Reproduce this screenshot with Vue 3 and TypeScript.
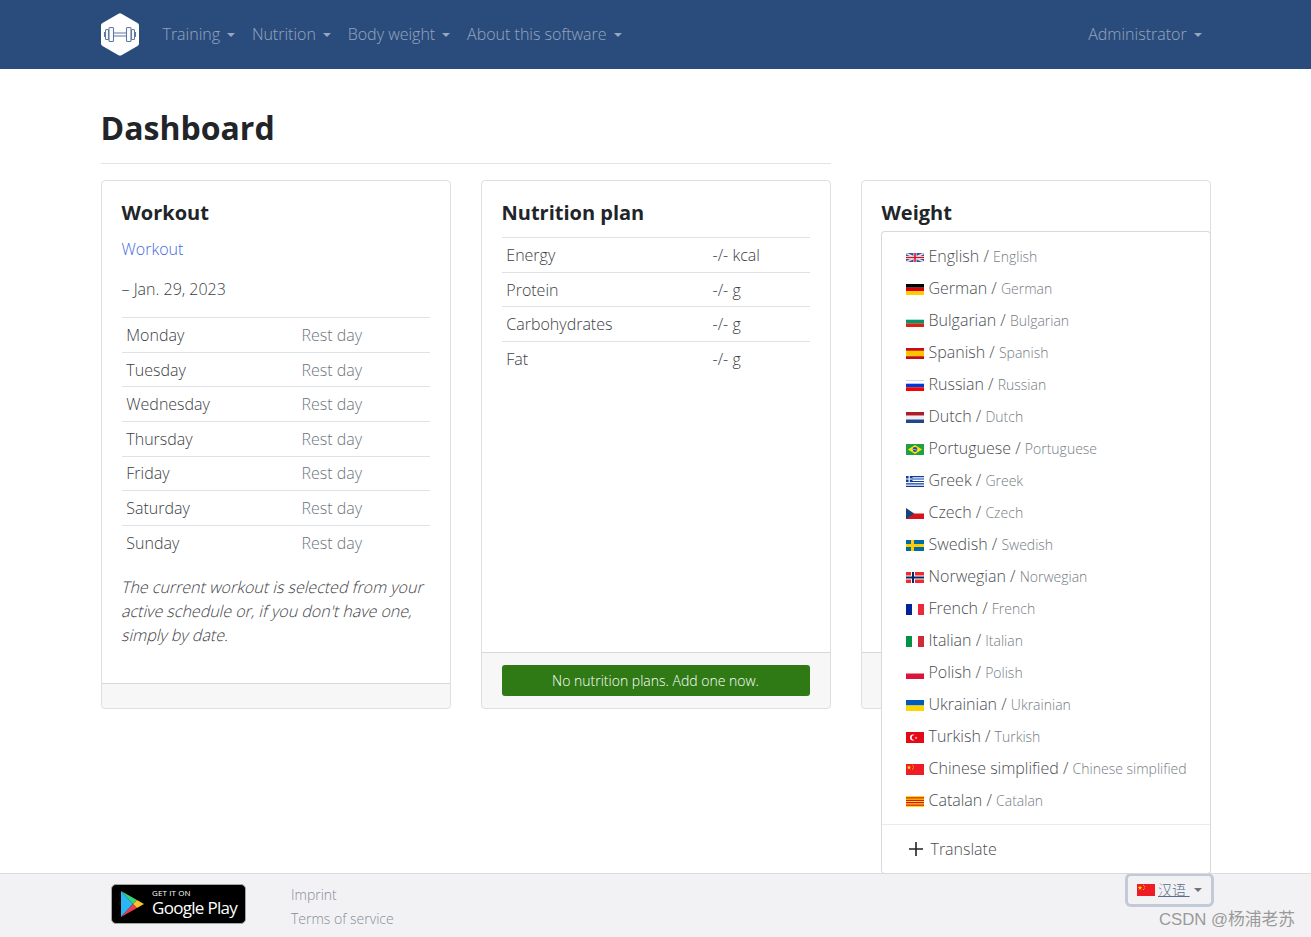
<script setup lang="ts">
type Shape = [string, string]

const navItems: string[] = ['Training', 'Nutrition', 'Body weight', 'About this software']
const days: string[] = ['Monday', 'Tuesday', 'Wednesday', 'Thursday', 'Friday', 'Saturday', 'Sunday']
const macros: [string, string][] = [
  ['Energy', '-/- kcal'],
  ['Protein', '-/- g'],
  ['Carbohydrates', '-/- g'],
  ['Fat', '-/- g'],
]
const noteLines: string[] = [
  'The current workout is selected from your',
  "active schedule or, if you don't have one,",
  'simply by date.',
]

const china: Shape[] = [
  ['M0 0h18v11H0z', '#ee1c25'],
  ['M3 1.2l.6 1.6h1.6l-1.3 1 .5 1.6L3 4.4l-1.4 1 .5-1.6-1.3-1h1.6z', '#ffde00'],
  ['M6 .8h.8v.8H6zM7 2h.8v.8H7zM7 3.4h.8v.8H7zM6 4.6h.8v.8H6z', '#ffde00'],
]

const languages: { name: string; flag: Shape[] }[] = [
  {
    name: 'English',
    flag: [
      ['M0 1h18v9H0z', '#3b4f93'],
      ['M0 1.2h2L18 9v1h-2L0 2.2zM18 1.2h-2L0 9v1h2L18 2.2z', '#e8dfe6'],
      ['M7.5 1h3v9h-3zM0 4h18v3H0z', '#fff'],
      ['M8.2 1h1.6v9H8.2zM0 4.7h18v1.6H0z', '#cf142b'],
    ],
  },
  { name: 'German', flag: [['M0 0h18v3.7H0z', '#000'], ['M0 3.7h18v3.6H0z', '#d00'], ['M0 7.3h18V11H0z', '#ffce00']] },
  { name: 'Bulgarian', flag: [['M0 3.7h18v3.6H0z', '#00966e'], ['M0 7.3h18V11H0z', '#d62612']] },
  { name: 'Spanish', flag: [['M0 0h18v11H0z', '#c60b1e'], ['M0 2.7h18v5.6H0z', '#ffc400']] },
  { name: 'Russian', flag: [['M0 3.7h18v3.6H0z', '#0039d5'], ['M0 7.3h18V11H0z', '#f00'], ['M0 0h18v.6H0z', '#b9b9d6']] },
  { name: 'Dutch', flag: [['M0 0h18v3.7H0z', '#ae1c28'], ['M0 7.3h18V11H0z', '#21468b'], ['M0 3.7h18v3.6H0z', '#f1eef1']] },
  {
    name: 'Portuguese',
    flag: [
      ['M0 0h18v11H0z', '#229e45'],
      ['M9 1l7 4.5L9 10 2 5.5z', '#f8e509'],
      ['M9 3.1a2.4 2.4 0 1 0 0 4.8 2.4 2.4 0 0 0 0-4.8z', '#2b49a3'],
      ['M6.8 4.9l4.5 1.2v.5L6.700 5.4z', '#fff'],
    ],
  },
  {
    name: 'Greek',
    flag: [
      ['M0 0h18v11H0z', '#fff'],
      ['M0 0h18v1.2H0zM0 2.4h18v1.2H0zM0 4.9h18v1.2H0zM0 7.3h18v1.2H0zM0 9.8h18V11H0z', '#0d3da1'],
      ['M0 0h6.5v6.1H0z', '#0d3da1'],
      ['M2.6 0h1.2v6.1H2.6zM0 2.4h6.5v1.2H0z', '#fff'],
    ],
  },
  { name: 'Czech', flag: [['M0 0h18v5.5H0z', '#fff'], ['M0 5.5h18V11H0z', '#d7141a'], ['M0 0l8.2 5.5L0 11z', '#11457e']] },
  { name: 'Swedish', flag: [['M0 0h18v11H0z', '#006aa7'], ['M5 0h3v11H5zM0 4h18v3H0z', '#fecc00']] },
  {
    name: 'Norwegian',
    flag: [['M0 0h18v11H0z', '#ef2b2d'], ['M5 0h4v11H5zM0 3.5h18v4H0z', '#fff'], ['M6 0h2v11H6zM0 4.500h18v2H0z', '#002868']],
  },
  { name: 'French', flag: [['M0 0h6v11H0z', '#002395'], ['M12 0h6v11h-6z', '#ed2939']] },
  { name: 'Italian', flag: [['M0 0h6v11H0z', '#009246'], ['M12 0h6v11h-6z', '#ce2b37']] },
  { name: 'Polish', flag: [['M0 5.5h18V11H0z', '#dc143c']] },
  { name: 'Ukrainian', flag: [['M0 0h18v5.5H0z', '#005bbb'], ['M0 5.5h18V11H0z', '#ffd500']] },
  {
    name: 'Turkish',
    flag: [
      ['M0 0h18v11H0z', '#e30a17'],
      ['M7 2.5a3 3 0 1 0 0 6 3 3 0 0 0 2-.8 2.4 2.4 0 1 1 0-4.4 3 3 0 0 0-2-.8z', '#fff'],
      ['M10 4.500l.4 1h1l-.8.6.3 1-.9-.6-.8.6.3-1-.8-.6h1z', '#fff'],
    ],
  },
  { name: 'Chinese simplified', flag: china },
  {
    name: 'Catalan',
    flag: [
      ['M0 0h18v11H0z', '#fcdd09'],
      ['M0 1.2h18v1.2H0zM0 3.7h18v1.2H0zM0 6.1h18v1.2H0zM0 8.6h18v1.2H0z', '#da121a'],
    ],
  },
]
</script>

<template>
  <div class="page">
    <nav class="navbar">
      <div class="nav-inner">
        <svg class="logo" viewBox="0 0 38 43" aria-label="wger logo">
          <path d="M17.5.7a3 3 0 0 1 3 0l16 9.2a3 3 0 0 1 1.500 2.600v18a3 3 0 0 1-1.500 2.600l-16 9.200a3 3 0 0 1-3 0l-16-9.200A3 3 0 0 1 0 30.500v-18a3 3 0 0 1 1.500-2.600z" fill="#fff" />
          <g fill="none" stroke="#5e789f" stroke-width="1.100">
            <path d="M3.500 19v5M34.500 19v5M13 20h12M13 23h12" />
            <rect x="4.500" y="16.500" width="3" height="10" rx="1" />
            <rect x="8" y="14.500" width="4.500" height="14" rx="1" />
            <rect x="25.500" y="14.500" width="4.500" height="14" rx="1" />
            <rect x="30.500" y="16.500" width="3" height="10" rx="1" />
          </g>
        </svg>
        <a v-for="item in navItems" :key="item" class="nav-link">{{ item }}<span class="caret"></span></a>
        <a class="nav-link nav-right">Administrator<span class="caret"></span></a>
      </div>
    </nav>

    <main class="content">
      <h2 class="page-title">Dashboard</h2>
      <div class="cards">
        <section class="card">
          <div class="card-body">
            <h5 class="card-title">Workout</h5>
            <p class="para"><a class="link">Workout</a></p>
            <p class="para">– Jan. 29, 2023</p>
            <table class="table">
              <tbody>
                <tr v-for="day in days" :key="day">
                  <td class="day">{{ day }}</td>
                  <td class="muted">Rest day</td>
                </tr>
              </tbody>
            </table>
            <p class="para">
              <span v-for="line in noteLines" :key="line" class="note-line">{{ line }}</span>
            </p>
          </div>
          <div class="card-footer"></div>
        </section>

        <section class="card">
          <div class="card-body">
            <h5 class="card-title">Nutrition plan</h5>
            <table class="table">
              <tbody>
                <tr v-for="m in macros" :key="m[0]">
                  <td class="macro">{{ m[0] }}</td>
                  <td>{{ m[1] }}</td>
                </tr>
              </tbody>
            </table>
          </div>
          <div class="card-footer"><a class="btn-green">No nutrition plans. Add one now.</a></div>
        </section>

        <section class="card">
          <div class="card-body">
            <h5 class="card-title">Weight</h5>
          </div>
          <div class="card-footer"><a class="btn-green">&nbsp;</a></div>
        </section>
      </div>
    </main>

    <footer class="footer">
      <div class="footer-inner">
        <div class="badge">
          <svg class="play" viewBox="0 0 23 26">
            <path d="M0 0v26l12-13z" fill="#29b6f2" />
            <path d="M0 0l12 13 4-4z" fill="#3bd17a" />
            <path d="M0 26l12-13 4 4z" fill="#ec3b4c" />
            <path d="M16 9l7 4-7 4-4-4z" fill="#fbc02d" />
          </svg>
          <div class="badge-text">
            <span class="badge-small">GET IT ON</span>
            <span class="badge-large">Google Play</span>
          </div>
        </div>
        <div class="footer-links">
          <a>Imprint</a>
          <a>Terms of service</a>
        </div>
        <div class="lang">
          <div class="dropdown">
            <a v-for="lang in languages" :key="lang.name" class="dropdown-item">
              <svg class="flag" viewBox="0 0 18 11">
                <path v-for="(s, i) in lang.flag" :key="i" :d="s[0]" :fill="s[1]" />
              </svg>
              <span>{{ lang.name }} / <small>{{ lang.name }}</small></span>
            </a>
            <div class="divider"></div>
            <a class="dropdown-item translate">
              <svg class="plus" viewBox="0 0 14 14"><path d="M7 0v14M0 7h14" stroke="#212529" stroke-width="1.600" fill="none" /></svg>
              <span>Translate</span>
            </a>
          </div>
          <button class="lang-btn" type="button">
            <svg class="btn-flag" viewBox="0 0 18 11" preserveAspectRatio="none">
              <path v-for="(s, i) in china" :key="i" :d="s[0]" :fill="s[1]" />
            </svg>
            <span class="lang-text">汉语 </span><span class="caret dark"></span>
          </button>
        </div>
      </div>
      <span class="watermark">CSDN @杨浦老苏</span>
    </footer>
  </div>
</template>

<style>
html, body { margin: 0; background: #fff; }
</style>

<style scoped>
.page {
  height: 937px;
  display: flex;
  flex-direction: column;
  font-family: "Open Sans", "Noto Sans CJK SC", sans-serif;
  font-size: 16px;
  font-weight: 300;
  line-height: 24px;
  color: #3c4045;
  overflow: hidden;
}
.navbar { height: 69px; background: #2a4c7d; flex: none; }
.nav-inner {
  width: 1110px;
  margin: 0 auto;
  height: 100%;
  display: flex;
  align-items: center;
  box-sizing: border-box;
}
.logo { width: 38px; height: 43px; margin-right: 16px; flex: none; }
.nav-link { padding: 8px 8px 9px; color: rgba(255, 255, 255, .5); white-space: nowrap; }
.nav-right { margin-left: auto; }
.caret {
  display: inline-block;
  margin: 0 .85px 0 7px;
  vertical-align: 3px;
  border-top: 4.400px solid;
  border-right: 4.400px solid transparent;
  border-left: 4.400px solid transparent;
  width: 0;
  height: 0;
}
.caret.dark { color: #6c757d; margin: 0 0 0 4px; vertical-align: 2px; border-width: 4px 4px 0; }

.content {
  flex: 1;
  width: 1110px;
  margin: 0 auto;
  padding: 40px 0 0;
  box-sizing: border-box;
}
.page-title {
  width: 730px;
  margin: 0 0 16.300px;
  padding-bottom: 16px;
  font-size: 32px;
  font-weight: 700;
  line-height: 38px;
  color: #212529;
  border-bottom: 1px solid #e3e3e3;
}
.cards { display: flex; gap: 30px; align-items: stretch; }
.card {
  width: 350px;
  box-sizing: border-box;
  border: 1px solid rgba(0, 0, 0, .125);
  border-radius: 4px;
  display: flex;
  flex-direction: column;
}
.card-body { flex: 1; padding: 20px; }
.card-title { margin: 0 0 12px; font-size: 20px; font-weight: 700; line-height: 24px; color: #212529; }
.para { margin: 0 0 16px; }
.link { color: #3f6bdc; }
.note-line {
  display: block;
  width: max-content;
  margin-left: -1px;
  white-space: nowrap;
  transform: skewX(-14deg);
  transform-origin: 0 75%;
}
.table { width: 100%; table-layout: fixed; border-collapse: collapse; margin-bottom: 16px; }
.table td { padding: 4.800px; border-top: 1px solid #dee2e6; line-height: 24px; }
.day { width: 175.200px; box-sizing: border-box; }
.macro { width: 206.200px; box-sizing: border-box; }
.muted { color: #6c757d; }
.card-footer {
  padding: 12px 20px;
  background: rgba(0, 0, 0, .03);
  border-top: 1px solid rgba(0, 0, 0, .125);
  border-radius: 0 0 3px 3px;
}
.btn-green {
  display: block;
  height: 31px;
  line-height: 31px;
  text-align: center;
  font-size: 14px;
  color: #fff;
  background: #2f7a15;
  border-radius: 3px;
}

.footer {
  position: relative;
  flex: none;
  height: 64px;
  box-sizing: border-box;
  background: #f2f2f4;
  border-top: 1px solid #dcdce0;
}
.footer-inner {
  width: 1110px;
  margin: 0 auto;
  height: 100%;
  display: flex;
  padding-left: 10.500px;
  box-sizing: border-box;
}
.badge {
  width: 135px;
  height: 40px;
  margin-top: 10px;
  flex: none;
  box-sizing: border-box;
  background: #000;
  border: 1px solid #a6a6a6;
  border-radius: 5px;
  display: flex;
  align-items: center;
  padding-left: 9px;
  color: #fff;
}
.play { width: 23px; height: 26px; flex: none; }
.badge-text { display: flex; flex-direction: column; margin-left: 8px; padding-bottom: 2px; }
.badge-small { font-size: 8px; line-height: 10px; font-weight: 500; letter-spacing: .1px; }
.badge-large { font-size: 17px; line-height: 20px; font-weight: 400; letter-spacing: -.7px; white-space: nowrap; }
.footer-links {
  margin: 9px 0 0 45px;
  display: flex;
  flex-direction: column;
  font-size: 14px;
  color: #868e96;
}
.lang { position: relative; margin-left: auto; width: 83px; }
.lang-btn {
  display: flex;
  align-items: center;
  width: 83px;
  height: 28px;
  margin-top: 2px;
  padding: 0 0 0 9.500px;
  box-sizing: border-box;
  border: 0;
  border-radius: 3px;
  background: #f2f2f4;
  box-shadow: 0 0 0 3px #c2cad8;
  font: inherit;
  font-size: 14px;
  color: #5b6d8a;
}
.btn-flag { width: 18px; height: 12px; margin-right: 3px; flex: none; }
.lang-text { text-decoration: underline; white-space: pre; }
.dropdown {
  position: absolute;
  right: 0;
  bottom: 100%;
  width: 330px;
  box-sizing: border-box;
  padding: 8px 0 0;
  background: #fff;
  border: 1px solid rgba(0, 0, 0, .15);
  border-radius: 4px;
  z-index: 5;
  color: #4a4e53;
}
.dropdown-item {
  display: flex;
  align-items: center;
  height: 32px;
  padding-left: 24px;
  white-space: pre;
}
.flag { width: 18px; height: 11px; margin: 2px 5px 0 0; flex: none; }
small { font-size: 14px; color: #757c84; }
.divider { margin-top: 8px; border-top: 1px solid #e9ecef; }
.translate { height: 48px; padding-left: 27px; }
.plus { width: 14px; height: 14px; margin-right: 8px; }
.watermark {
  position: absolute;
  right: 16px;
  top: 34px;
  font-family: "Liberation Sans", "Noto Sans CJK SC", sans-serif;
  font-size: 16.750px;
  line-height: 24px;
  font-weight: 400;
  color: #9a9a9a;
}
</style>
